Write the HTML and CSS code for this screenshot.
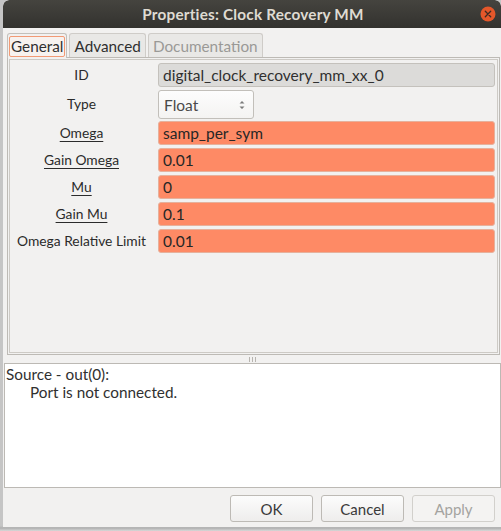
FILE: index.html
```html
<!DOCTYPE html>
<html>
<head>
<meta charset="utf-8">
<link rel="stylesheet" href="styles.css">
</head>
<body>
<div class="desk">
  <div class="window">
    <div class="titlebar">
      <span class="title">Properties: Clock Recovery MM</span>
      <span class="close"><svg width="16" height="16" viewBox="0 0 16 16"><circle cx="8" cy="8" r="7.5" fill="#e4572a"/><path d="M5.3 5.3 L10.7 10.7 M10.7 5.3 L5.3 10.7" stroke="#3b2a22" stroke-width="1.3" stroke-linecap="round"/></svg></span>
    </div>
    <div class="content">
      <div class="tabs">
        <div class="tab active"><span class="focus">General</span></div>
        <div class="tab">Advanced</div>
        <div class="tab disabled">Documentation</div>
      </div>
      <div class="frame">
        <div class="grid">
          <div class="label">ID</div>
          <div class="entry readonly">digital_clock_recovery_mm_xx_0</div>
          <div class="label">Type</div>
          <div class="combo-cell"><div class="combo"><span>Float</span><svg width="8" height="12" viewBox="0 0 8 12"><path d="M1.5 4.5 L4 2 L6.5 4.5 Z M1.5 7.5 L4 10 L6.5 7.5 Z" fill="#7a7a7a"/></svg></div></div>
          <div class="label"><u>Omega</u></div>
          <div class="entry err">samp_per_sym</div>
          <div class="label"><u>Gain Omega</u></div>
          <div class="entry err">0.01</div>
          <div class="label"><u>Mu</u></div>
          <div class="entry err">0</div>
          <div class="label"><u>Gain Mu</u></div>
          <div class="entry err">0.1</div>
          <div class="label">Omega Relative Limit</div>
          <div class="entry err">0.01</div>
        </div>
      </div>
      <div class="handle"><i></i><i></i><i></i></div>
      <div class="textview">
        <div>Source - out(0):</div>
        <div class="indent">Port is not connected.</div>
      </div>
      <div class="buttons">
        <button class="btn">OK</button>
        <button class="btn">Cancel</button>
        <button class="btn dis">Apply</button>
      </div>
    </div>
  </div>
</div>
</body>
</html>
```

FILE: styles.css
```css
* { box-sizing: border-box; }
html, body { margin: 0; padding: 0; }
body {
  width: 501px; height: 531px; overflow: hidden;
  background: #b9b9b9;
  font-family: "Lato", "Noto Sans", sans-serif;
  font-size: 14px;
  color: #2f2f2f;
}
.desk {
  width: 501px; height: 531px;
  background: linear-gradient(to bottom, #c5c5c5 0, #c5c5c5 526px, #b0b0b0 528px, #d8d8d8 531px);
  padding-left: 3px;
}
.window {
  width: 498px; height: 527px;
  background: #f2f1f0;
  border-radius: 6px 6px 0 0;
  display: flex; flex-direction: column;
  overflow: hidden;
}
.titlebar {
  height: 28px; flex: none;
  background: linear-gradient(#45443f, #3a3935 60%, #33322e);
  display: flex; align-items: center; justify-content: center;
  position: relative;
  border-radius: 6px 6px 0 0;
}
.title {
  color: #dfdbd2; font-weight: bold; font-size: 15.3px;
  font-family: "Lato", "Noto Sans", sans-serif;
  margin-left: 2px; letter-spacing: 0.2px;
}
.close { position: absolute; right: 5px; top: 6px; width: 16px; height: 16px; }
.close svg { display: block; }
.content {
  flex: 1; display: flex; flex-direction: column;
  padding: 5px 1px 0 1px;
}
.tabs { display: flex; height: 24px; padding-left: 3px; gap: 2px; flex: none; }
.tab {
  border: 1px solid #cfccc8; border-bottom: none;
  border-radius: 3px 3px 0 0;
  background: #e9e8e6;
  padding: 0 4px;
  display: flex; align-items: center;
  color: #2f2f2f; font-size: 15.3px;
  height: 24px;
}
.tab.active { background: #f2f1f0; padding: 0 1px; border-color: #c3c0bb; height: 25px; position: relative; z-index: 1; }
.tab.active .focus {
  border: 1px solid #f29a75; border-radius: 2px;
  padding: 1px 1px; line-height: 17px; background: #f7f2ef;
}
.tab.disabled { color: #9a9996; padding: 0 4px; }
.frame {
  margin-left: 3px; margin-right: 0;
  height: 298px; flex: none;
  border: 1px solid #bdbab5;
  box-shadow: inset 0 0 0 1px #f2f1f0, inset 0 0 0 2px #cdcac5;
  padding: 5px 4px 0 3px;
}
.grid {
  display: grid;
  grid-template-columns: 147px 337px;
  grid-template-rows: 24px 28px;
  grid-auto-rows: 24px;
  row-gap: 3px;
}
.label {
  display: flex; align-items: center; justify-content: center;
  font-size: 13.8px; color: #2b2b2b; padding-bottom: 1px; padding-right: 6px;
}
.label u { text-underline-offset: 3px; text-decoration-thickness: 1px; }
.entry {
  border-radius: 3px;
  display: flex; align-items: center;
  padding-left: 4px; font-size: 15.5px; color: #262626;
}
.readonly { background: #dcdbd9; border: 1px solid #c4c1bc; color: #303030; }
.err { background: #fe8a65; border: 1px solid #e6b19c; }
.combo-cell { display: flex; align-items: flex-start; }
.combo {
  width: 96px; height: 29px; flex: none;
  border: 1px solid #c2bfba; border-radius: 3px;
  background: linear-gradient(#fdfdfd, #f4f3f2);
  display: flex; align-items: center; justify-content: space-between;
  padding: 0 7px 0 5px; color: #4a4a4a; font-size: 15.5px;
}
.combo svg { display: block; }
.handle {
  height: 8px; flex: none;
  display: flex; justify-content: center; align-items: center; gap: 2px;
}
.handle i { display: block; width: 1px; height: 5px; background: #b7b4af; }
.textview {
  height: 125px; flex: none;
  margin-left: 0; margin-right: -1px;
  background: #fff;
  border: 1px solid #bcb9b4;
  padding: 1px 1px;
  font-size: 15.3px; color: #303030;
  line-height: 18px;
}
.indent { padding-left: 24px; }
.buttons {
  display: flex; justify-content: flex-end; gap: 8px;
  padding: 7px 5px 0 0;
}
.btn {
  width: 83px; height: 27px;
  border: 1px solid #bdbab5; border-radius: 3px;
  background: linear-gradient(#fcfcfc, #eeedec);
  font-family: "Lato", "Noto Sans", sans-serif;
  font-size: 15px; color: #3a3a3a;
  padding: 0;
}
.btn.dis { color: #a4a3a0; background: #f4f3f2; border-color: #d2d0cc; }
```
